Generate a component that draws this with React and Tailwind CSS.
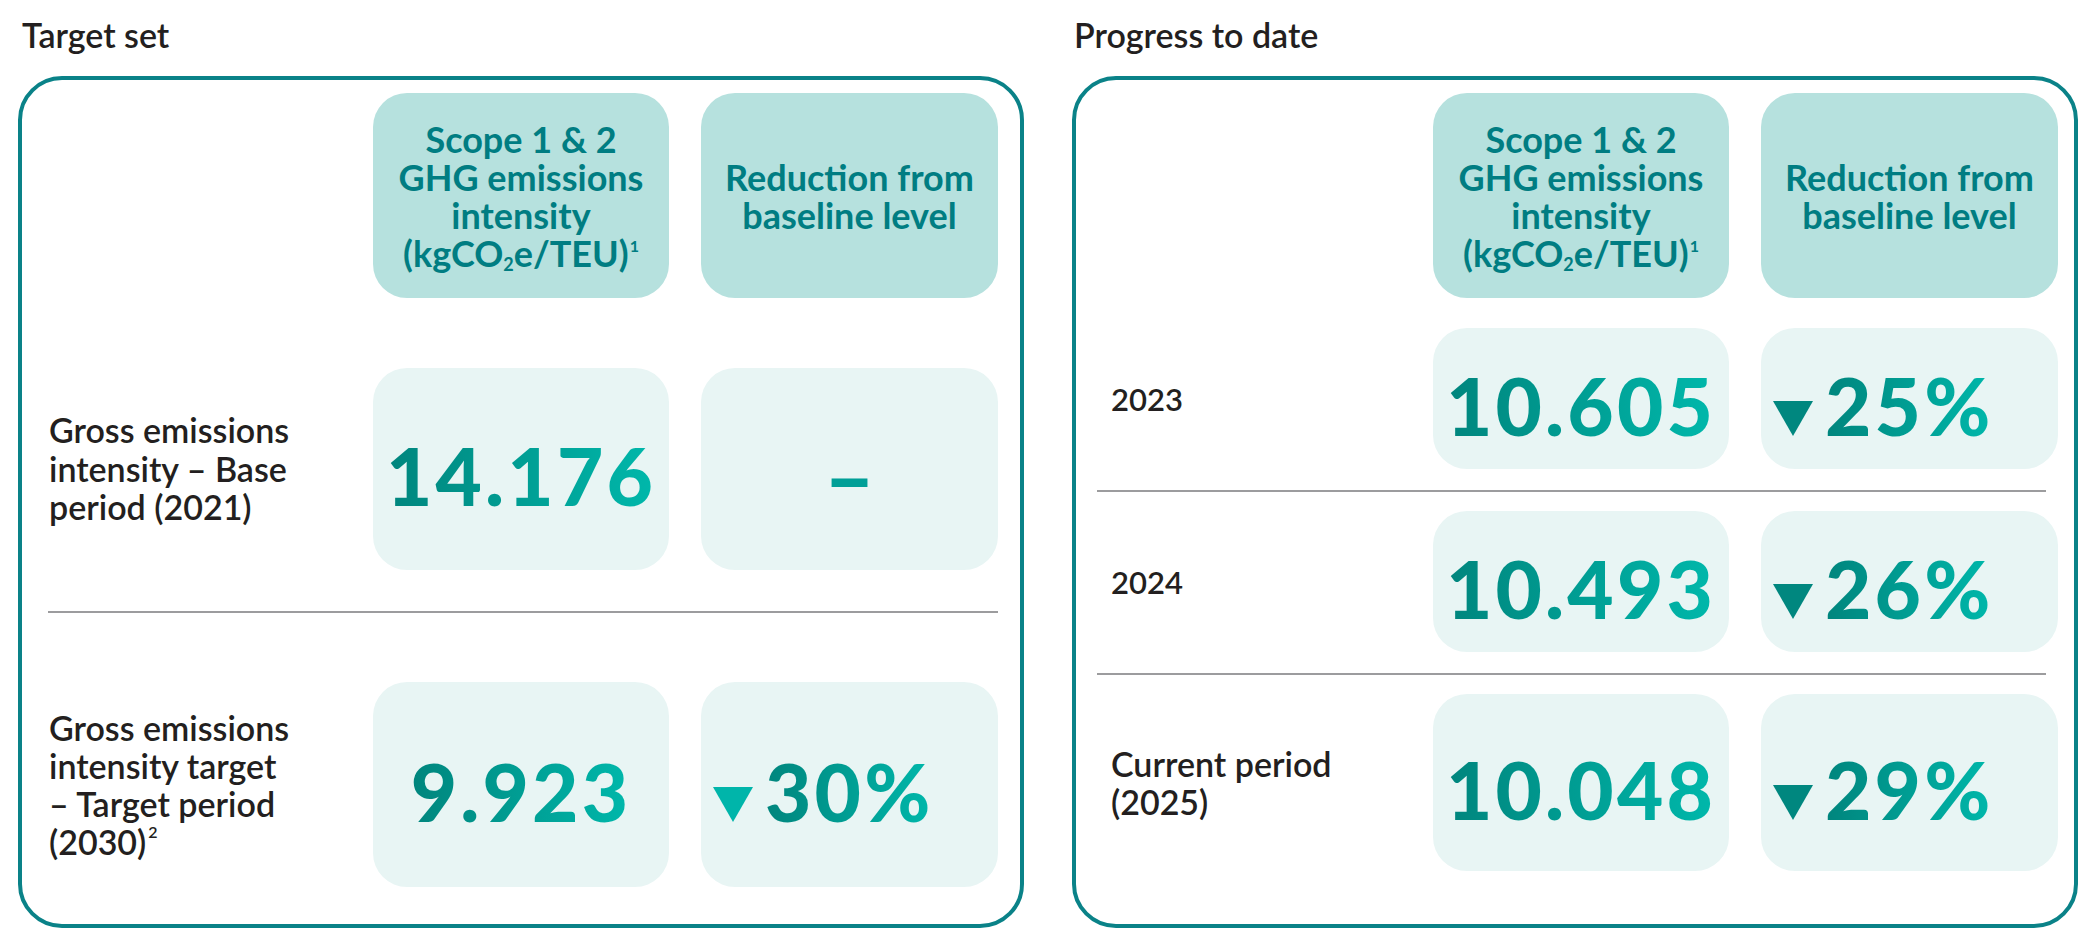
import React from "react";

const font = { fontFamily: "Lato, 'Noto Sans', sans-serif" };

const numCls =
  "inline-block text-[80px] leading-none font-black tracking-[0.04em] bg-linear-to-r from-[#00857d] to-[#00b8ab] bg-clip-text text-transparent";

const Triangle = ({ color }) => (
  <svg width="40" height="35" viewBox="0 0 40 35" className="mr-[12px] inline-block">
    <polygon points="0,0 40,0 20,35" fill={color} />
  </svg>
);

const HeaderBoxes = () => (
  <>
    <div className="w-[296px] h-[205px] rounded-[34px] bg-[#b6e1de] flex items-center justify-center text-center text-[#007d82] font-bold text-[36px] leading-[38px]">
      <p>
        Scope 1 &amp; 2
        <br />
        GHG emissions
        <br />
        intensity
        <br />
        (kgCO<sub className="text-[18px]">2</sub>e/TEU)
        <sup className="text-[16px] ml-[1px] -top-[15px]">1</sup>
      </p>
    </div>
    <div className="ml-[32px] w-[297px] h-[205px] rounded-[34px] bg-[#b6e1de] flex items-center justify-center text-center text-[#007d82] font-bold text-[36px] leading-[38px]">
      <p>
        Reduction from
        <br />
        baseline level
      </p>
    </div>
  </>
);

const Value = ({ value, h }) => (
  <div className={`w-[296px] ${h} rounded-[34px] bg-[#e8f5f4] flex items-center justify-center pt-[12px]`}>
    <span className={numCls}>{value}</span>
  </div>
);

const Pct = ({ value, h, tri }) => (
  <div className={`ml-[32px] w-[297px] ${h} rounded-[34px] bg-[#e8f5f4] flex items-center justify-start pl-[12px] pt-[12px]`}>
    <span className="flex items-baseline">
      <Triangle color={tri} />
      <span className={numCls}>{value}</span>
    </span>
  </div>
);

const Divider = ({ cls }) => <div className={`h-[2px] bg-[#9c9c9e] ${cls}`}></div>;

const TargetSet = () => (
  <div className="w-[1006px]">
    <h2 className="pl-[4px] h-[40px] leading-[40px] text-[34px] font-semibold text-[#231f20] mb-[21px]">Target set</h2>
    <div className="h-[852px] border-4 border-[#0a8288] rounded-[44px] pt-[13px]">
      {/* header */}
      <div className="flex">
        <div className="w-[351px]"></div>
        <HeaderBoxes />
      </div>

      {/* base period */}
      <div className="flex items-center mt-[70px]">
        <div className="w-[351px] pl-[27px] text-[34px] leading-[38.5px] font-semibold text-[#231f20]">
          Gross emissions
          <br />
          intensity – Base
          <br />
          period (2021)
        </div>
        <Value value="14.176" h="h-[202px]" />
        <div className="ml-[32px] w-[297px] h-[202px] rounded-[34px] bg-[#e8f5f4] flex items-center justify-center pt-[12px]">
          <span className="text-[88px] leading-none font-black text-[#009f97]">–</span>
        </div>
      </div>

      <Divider cls="mt-[41px] ml-[26px] mr-[22px]" />

      {/* target period */}
      <div className="flex items-center mt-[69px]">
        <div className="w-[351px] pl-[27px] text-[34px] leading-[38px] font-semibold text-[#231f20]">
          Gross emissions
          <br />
          intensity target
          <br />
          – Target period
          <br />
          (2030)<sup className="text-[16px] ml-[2px] -top-[17px]">2</sup>
        </div>
        <Value value="9.923" h="h-[205px]" />
        <Pct value="30%" h="h-[205px]" tri="#00b5aa" />
      </div>
    </div>
  </div>
);

const rows = [
  { label: ["2023"], size: "text-[31px]", value: "10.605", pct: "25%", h: "h-[141px]" },
  { label: ["2024"], size: "text-[31px]", value: "10.493", pct: "26%", h: "h-[141px]" },
  { label: ["Current period", "(2025)"], size: "text-[34px]", value: "10.048", pct: "29%", h: "h-[177px]" },
];

const Progress = () => (
  <div className="w-[1006px]">
    <h2 className="pl-[2px] h-[40px] leading-[40px] text-[34px] font-semibold text-[#231f20] mb-[21px]">Progress to date</h2>
    <div className="h-[852px] border-4 border-[#0a8288] rounded-[44px] pt-[13px]">
      <div className="flex">
        <div className="w-[357px]"></div>
        <HeaderBoxes />
      </div>

      {rows.map((r, i) => (
        <div key={r.value}>
          {i > 0 && <Divider cls="mt-[21px] mb-[19px] ml-[21px] mr-[28px]" />}
          <div className={`flex items-center ${i === 0 ? "mt-[30px]" : ""}`}>
            <div className={`w-[357px] pl-[35px] ${r.size} leading-[38px] font-semibold text-[#231f20]`}>
              {r.label.map((l) => (
                <div key={l}>{l}</div>
              ))}
            </div>
            <Value value={r.value} h={r.h} />
            <Pct value={r.pct} h={r.h} tri="#00877f" />
          </div>
        </div>
      ))}
    </div>
  </div>
);

export default function App() {
  return (
    <div style={font} className="w-[2097px] h-[947px] bg-white flex gap-[48px] pl-[18px] pt-[15px]">
      <TargetSet />
      <Progress />
    </div>
  );
}
